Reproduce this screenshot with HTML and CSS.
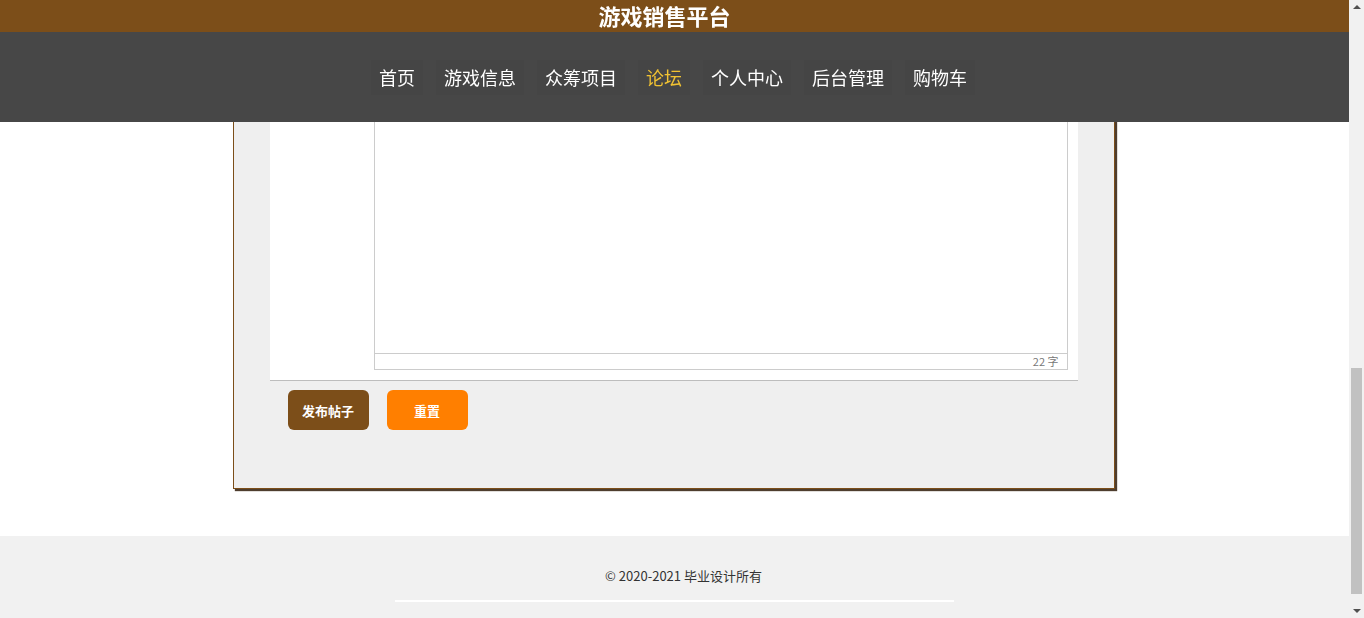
FILE: index.html
```html
<!DOCTYPE html>
<html lang="zh-CN">
<head>
  <meta charset="UTF-8">
  <meta name="viewport" content="width=device-width, initial-scale=1.0">
  <title>论坛 - 发布帖子</title>
  <link rel="stylesheet" href="styles.css">
</head>
<body>

  <!-- 顶部固定导航 -->
  <div class="header">
    <div class="brand">游戏销售平台</div>
    <div class="nav">
      <a href="#">首页</a>
      <a href="#">游戏信息</a>
      <a href="#">众筹项目</a>
      <a href="#" class="active">论坛</a>
      <a href="#">个人中心</a>
      <a href="#">后台管理</a>
      <a href="#">购物车</a>
    </div>
  </div>

  <div class="main">
    <div class="panel">
      <div class="form-row">
        <label class="label">帖子标题</label>
        <div class="field"><input class="input" type="text" value="新游戏发售讨论"></div>
      </div>
      <div class="form-row">
        <label class="label">帖子内容</label>
        <div class="field">
          <div class="editor">
            <div class="editor-toolbar"></div>
            <div class="editor-body"></div>
            <div class="editor-status">22 字</div>
          </div>
        </div>
      </div>
      <div class="actions">
        <button class="btn btn-submit">发布帖子</button>
        <button class="btn btn-reset">重置</button>
      </div>
    </div>
  </div>

  <div class="footer">
    <p>© 2020-2021 毕业设计所有</p>
    <div class="footer-line"></div>
  </div>

  <!-- 滚动条 -->
  <div class="scrollbar">
    <div class="arrow-up"></div>
    <div class="thumb"></div>
    <div class="arrow-down"></div>
  </div>

  <script>
    window.scrollTo(0, document.body.scrollHeight);
  </script>
</body>
</html>
```

FILE: styles.css
```css
html {
  background: #f1f1f1;
}

body {
  margin: 0 15px 0 0;
  padding: 0;
  background: #ffffff;
  color: #333;
  font-family: "Noto Sans CJK SC", "Liberation Sans", sans-serif;
  font-size: 14px;
}

.header {
  position: fixed;
  top: 0;
  left: 0;
  right: 15px;
  z-index: 10;
}

.brand {
  height: 32px;
  line-height: 30px;
  background-color: #7c4e19;
  color: #fff;
  font-size: 22px;
  font-weight: bold;
  text-align: center;
  padding-right: 20px;
}

.nav {
  height: 90px;
  background-color: #474747;
  display: flex;
  justify-content: center;
  align-items: center;
  padding-right: 3px;
}

.nav a {
  color: #fff;
  text-decoration: none;
  font-size: 18px;
  line-height: 27px;
  padding: 4px 8px;
  margin: 0 6.5px;
  background-color: #454545;
}

.nav a.active {
  color: #f1c232;
}

.main {
  padding-top: 152px;
  padding-bottom: 47px;
  padding-right: 2px;
}

.panel {
  width: 882px;
  margin: 0 auto;
  background-color: #efefef;
  border: 1px solid #7c4e19;
  box-shadow: 2px 2px 1px #4e3d2e;
  padding: 20px 36px 58px 36px;
  box-sizing: border-box;
}

.form-row {
  display: flex;
  background-color: #fff;
  border-bottom: 1px solid #bdbdbd;
  padding: 10px 10px 10px 0;
}

.label {
  width: 104px;
  flex-shrink: 0;
  padding-top: 6px;
  font-size: 14px;
  color: #fff;
}

.field {
  flex: 1;
}

.input {
  width: 100%;
  height: 30px;
  border: 1px solid #ccc;
  box-sizing: border-box;
  padding: 0 8px;
  font-family: inherit;
}

.editor {
  border: 1px solid #cccccc;
}

.editor-toolbar {
  height: 60px;
  border-bottom: 1px solid #ddd;
  background-color: #fafafa;
}

.editor-body {
  height: 620px;
  background-color: #fff;
}

.editor-status {
  height: 15px;
  border-top: 1px solid #cccccc;
  text-align: right;
  font-size: 11px;
  line-height: 15px;
  color: #777;
  padding-right: 8px;
}

.actions {
  display: flex;
  gap: 18px;
  padding: 9px 18px 0;
}

.btn {
  width: 81px;
  height: 40px;
  border: none;
  border-radius: 6px;
  color: #fff;
  font-family: inherit;
  font-size: 13px;
  font-weight: bold;
  cursor: pointer;
}

.btn-submit {
  background-color: #7c4e19;
}

.btn-reset {
  background-color: #ff7f00;
}

.footer {
  background-color: #f1f1f1;
  padding: 30px 0 16px;
  text-align: center;
}

.footer p {
  margin: 0 0 14px;
  padding-left: 18px;
  font-size: 13px;
  line-height: 20px;
  color: #333;
}

.footer-line {
  width: 559px;
  height: 2px;
  margin: 0 auto;
  background-color: #fff;
}

.scrollbar {
  position: fixed;
  top: 0;
  right: 0;
  bottom: 0;
  width: 15px;
  background-color: #f1f1f1;
  z-index: 20;
}

.thumb {
  position: absolute;
  top: 368px;
  left: 2px;
  width: 11px;
  height: 226px;
  background-color: #c1c1c1;
}

.arrow-up,
.arrow-down {
  position: absolute;
  left: 4px;
  width: 0;
  height: 0;
  border-left: 4px solid transparent;
  border-right: 4px solid transparent;
}

.arrow-up {
  top: 5px;
  border-bottom: 4px solid #505050;
}

.arrow-down {
  bottom: 5px;
  border-top: 4px solid #505050;
}
```
